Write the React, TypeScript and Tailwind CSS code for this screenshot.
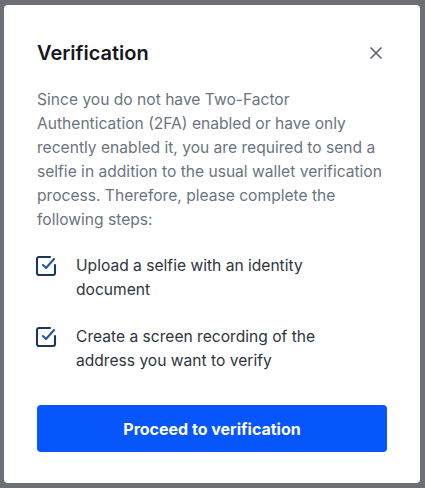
import { X } from "lucide-react";

function CheckIcon() {
  return (
    <svg
      width="24"
      height="24"
      viewBox="0 0 24 24"
      fill="none"
      strokeWidth="2.1"
      strokeLinecap="round"
      strokeLinejoin="round"
      className="shrink-0 -ml-[3px]"
    >
      <path d="M21 11v8a2 2 0 0 1-2 2H5a2 2 0 0 1-2-2V5a2 2 0 0 1 2-2h11" stroke="#1b365f" />
      <path d="m9 11 3 3 8-9" stroke="#2a5597" />
    </svg>
  );
}

const steps = [
  "Upload a selfie with an identity document",
  "Create a screen recording of the address you want to verify",
];

export default function App() {
  return (
    <div
      className="w-[425px] h-[488px] bg-[#6c7074] pt-[5px] pl-[4px]"
      style={{ fontFamily: "Inter, 'Noto Sans', sans-serif" }}
    >
      <div className="w-[416px] h-[478px] bg-white rounded-[4px] px-[33px] pt-[34px]">
        <div className="flex items-center justify-between">
          <h2 className="text-[20px] leading-[28px] font-semibold text-[#16181d]">Verification</h2>
          <X size={20} strokeWidth={2} className="text-[#5c6470] mr-[1px]" />
        </div>

        <p className="mt-[21px] text-[15.6px] leading-[24px] text-[#6b7480]">
          Since you do not have Two-Factor Authentication (2FA) enabled or have only
          recently enabled it, you are required to send a selfie in addition to the usual
          wallet verification process. Therefore, please complete the following steps:
        </p>

        <ul className="mt-[22px] flex flex-col gap-[23px]">
          {steps.map((s) => (
            <li key={s} className="flex gap-[18px]">
              <CheckIcon />
              <span className="text-[15.6px] leading-[24px] text-[#2e3540] w-[255px]">{s}</span>
            </li>
          ))}
        </ul>

        <button className="mt-[32px] w-full h-[47px] rounded-[4px] bg-[#0756fb] text-white text-[16px] font-bold">
          Proceed to verification
        </button>
      </div>
    </div>
  );
}
